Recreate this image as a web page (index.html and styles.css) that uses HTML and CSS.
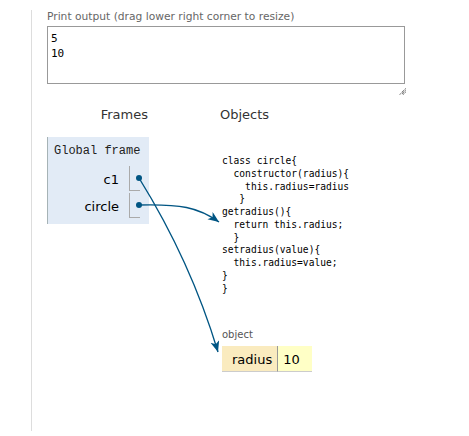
FILE: index.html
```html
<!DOCTYPE html>
<html>
<head>
<meta charset="utf-8">
<link rel="stylesheet" href="styles.css">
</head>
<body>
<div class="page">
  <div class="outlabel">Print output (drag lower right corner to resize)</div>
  <div class="outbox">5
10</div>
  <div class="griprow">
    <svg class="grip" width="7" height="7" viewBox="0 0 7 7">
      <path d="M6.5 0.5 L0.5 6.5 M6.5 2.5 L2.5 6.5 M6.5 4.5 L4.5 6.5" stroke="#444" stroke-width="1" stroke-dasharray="1 1" fill="none"/>
      <path d="M6.5 1.5 L1.5 6.5 M6.5 3.5 L3.5 6.5" stroke="#999" stroke-width="1" stroke-dasharray="1 1" fill="none"/>
    </svg>
  </div>
  <div class="viz">
    <div class="stackcol">
      <div class="colhead right">Frames</div>
      <div class="frame">
        <div class="framehead">Global frame</div>
        <table class="vars">
          <tr><td class="vname">c1</td><td class="vval"></td></tr>
          <tr><td class="vname">circle</td><td class="vval"></td></tr>
        </table>
      </div>
    </div>
    <div class="heapcol">
      <div class="colhead">Objects</div>
      <pre class="code">class circle{
  constructor(radius){
    this.radius=radius
   }
getradius(){
  return this.radius;
  }
setradius(value){
  this.radius=value;
}
}</pre>
      <div class="objlabel">object</div>
      <table class="obj">
        <tr><td class="okey">radius</td><td class="oval">10</td></tr>
      </table>
    </div>
  </div>
</div>
<svg class="arrows" width="469" height="436" viewBox="0 0 469 436">
  <defs>
    <marker id="ah" markerUnits="userSpaceOnUse" markerWidth="12" markerHeight="10" refX="11" refY="4.5" orient="auto">
      <path d="M0 0 L11 4.5 L0 9 L3 4.5 Z" fill="#005583"/>
    </marker>
  </defs>
  <path d="M139 178 Q190.8 261.5 218 352" stroke="#005583" stroke-width="1.4" fill="none" marker-end="url(#ah)"/>
  <path d="M139 205 C180 204 198 207 219 222" stroke="#005583" stroke-width="1.4" fill="none" marker-end="url(#ah)"/>
  <circle cx="139" cy="178" r="3" fill="#005583"/>
  <circle cx="139" cy="205" r="3" fill="#005583"/>
</svg>
</body>
</html>
```

FILE: styles.css
```css
html, body {
  margin: 0;
  padding: 0;
  background: #ffffff;
}

body {
  font-family: "DejaVu Sans", Verdana, sans-serif;
  color: #000000;
  position: relative;
  overflow: hidden;
}

.page {
  margin: 15px 0 0 31px;
  border-left: 1px solid #dddddd;
  padding-left: 15px;
  min-height: 421px;
  box-sizing: border-box;
}

.outlabel {
  margin-top: -5px;
  font-size: 10.7px;
  line-height: 14px;
  color: #666666;
  white-space: nowrap;
}

.outbox {
  margin-top: 2px;
  width: 358px;
  height: 58px;
  box-sizing: border-box;
  border: 1px solid #999999;
  padding: 4px 3px;
  font-family: "DejaVu Sans Mono", monospace;
  font-size: 11px;
  line-height: 15px;
  white-space: pre;
  color: #000000;
}

.griprow {
  width: 359px;
  height: 7px;
  margin-top: 4px;
  display: flex;
  justify-content: flex-end;
}

.grip {
  display: block;
}

.viz {
  display: flex;
  align-items: flex-start;
  margin-top: 12px;
}

.stackcol {
  width: 102px;
  margin-right: 71px;
}

.colhead {
  font-size: 13px;
  line-height: 16px;
  color: #333333;
  white-space: nowrap;
}

.colhead.right {
  text-align: right;
  padding-right: 1px;
}

.frame {
  margin-top: 14px;
  width: 102px;
  box-sizing: border-box;
  background: #e2ebf6;
  border-left: 1px solid #a6b3b6;
  padding: 7px 9px 4px 6px;
}

.framehead {
  font-family: "Liberation Mono", monospace;
  font-size: 12px;
  line-height: 15px;
  color: #222222;
  white-space: nowrap;
}

.vars {
  border-collapse: separate;
  border-spacing: 0 2px;
  margin: 5px 0 0 auto;
}

.vname {
  text-align: right;
  padding: 6px 10px 3px 0;
  font-size: 13px;
  line-height: 16px;
  white-space: nowrap;
}

.vval {
  width: 10px;
  padding: 0;
  border-left: 1px solid #aaaaaa;
  border-bottom: 1px solid #aaaaaa;
}

.code {
  margin: 32px 0 0 2px;
  font-family: "DejaVu Sans Mono", monospace;
  font-size: 9.6px;
  line-height: 12.75px;
  color: #000000;
}

.objlabel {
  margin: 34px 0 0 2px;
  font-size: 10px;
  line-height: 12px;
  color: #555555;
}

.obj {
  margin: 4.75px 0 0 2px;
  border-collapse: separate;
  border-spacing: 0;
}

.okey {
  background: #faebbf;
  padding: 6px 5px 3px 10px;
  font-size: 13px;
  line-height: 16px;
  text-align: right;
  border-bottom: 1px solid #cccccc;
}

.oval {
  background: #ffffc6;
  padding: 6px 12px 3px 5px;
  font-size: 13px;
  line-height: 16px;
  border-left: 1px solid #999999;
  border-bottom: 1px solid #cccccc;
}

.arrows {
  position: absolute;
  left: 0;
  top: 0;
  pointer-events: none;
}
```
